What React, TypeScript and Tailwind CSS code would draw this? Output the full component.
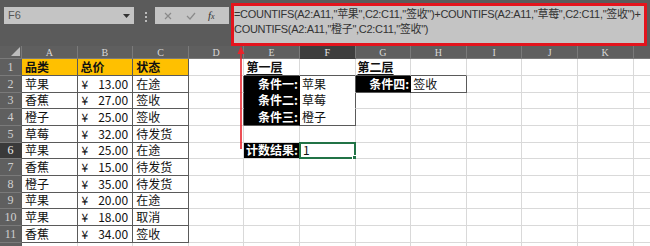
import React from "react";

const COLS = ["A", "B", "C", "D", "E", "F", "G", "H", "I", "J", "K", "L"];
const ROW_COUNT = 12;

const data: [string, string, string][] = [
  ["苹果", "13.00", "在途"],
  ["香蕉", "27.00", "签收"],
  ["橙子", "25.00", "签收"],
  ["草莓", "32.00", "待发货"],
  ["苹果", "25.00", "在途"],
  ["香蕉", "15.00", "待发货"],
  ["橙子", "35.00", "待发货"],
  ["苹果", "20.00", "在途"],
  ["苹果", "18.00", "取消"],
  ["香蕉", "34.00", "签收"],
];

const DARK = "dark";
const GRID = "grid";
const BLACK = "black";
const WHITE = "white";

function rightKind(c: string, r: number): string {
  if (["A", "B", "C"].includes(c) && r >= 1 && r <= 11) return DARK;
  if (c === "D" && r >= 2 && r <= 4) return DARK;
  if (c === "F" && r >= 2 && r <= 4) return DARK;
  if (c === "E" && r >= 2 && r <= 4) return BLACK;
  if (c === "G" && r === 2) return BLACK;
  if (c === "H" && r === 2) return DARK;
  if (c === "E" && r === 6) return BLACK;
  return GRID;
}

function bottomKind(c: string, r: number): string {
  if (["A", "B", "C"].includes(c) && r >= 1 && r <= 11) return DARK;
  if ((c === "E" || c === "F") && r === 1) return DARK;
  if ((c === "G" || c === "H") && r === 1) return DARK;
  if ((c === "E" || c === "F") && r === 4) return DARK;
  if ((c === "G" || c === "H") && r === 2) return DARK;
  if (c === "E" && (r === 2 || r === 3)) return BLACK;
  if (c === "F" && (r === 2 || r === 3)) return WHITE;
  return GRID;
}

function borderClasses(c: string, r: number): string {
  const rk = rightKind(c, r);
  const bk = bottomKind(c, r);
  const rc =
    rk === DARK
      ? "border-r-[#5a5a5a]"
      : rk === BLACK
      ? "border-r-black"
      : rk === WHITE
      ? "border-r-white"
      : "border-r-[#d9d9d9]";
  const bc =
    bk === DARK
      ? "border-b-[#5a5a5a]"
      : bk === BLACK
      ? "border-b-black"
      : bk === WHITE
      ? "border-b-white"
      : "border-b-[#d9d9d9]";
  return `border-r border-b ${rc} ${bc}`;
}

function cellContent(c: string, r: number): { node?: React.ReactNode; bg: string; align: string } {
  if (r === 1 && (c === "A" || c === "B" || c === "C")) {
    const t = c === "A" ? "品类" : c === "B" ? "总价" : "状态";
    return { node: <span className="font-bold">{t}</span>, bg: "bg-[#ffc000]", align: "justify-start pl-[3px]" };
  }
  if (r >= 2 && r <= 11) {
    const row = data[r - 2];
    if (c === "A") return { node: row[0], bg: "bg-white", align: "justify-start pl-[3px]" };
    if (c === "B")
      return {
        node: (
          <span className="flex w-full justify-between pl-[4px] pr-[4px]">
            <span>¥</span>
            <span>{row[1]}</span>
          </span>
        ),
        bg: "bg-white",
        align: "justify-start",
      };
    if (c === "C") return { node: row[2], bg: "bg-white", align: "justify-start pl-[3px]" };
  }
  if (r === 1 && c === "E")
    return { node: <span className="font-bold underline underline-offset-2">第一层</span>, bg: "bg-white", align: "justify-start pl-[2px]" };
  if (r === 1 && c === "G")
    return { node: <span className="font-bold underline underline-offset-2">第二层</span>, bg: "bg-white", align: "justify-start pl-[2px]" };
  if (c === "E" && r >= 2 && r <= 4) {
    const t = r === 2 ? "条件一:" : r === 3 ? "条件二:" : "条件三:";
    return { node: <span className="font-bold text-white">{t}</span>, bg: "bg-black", align: "justify-end pr-[1px]" };
  }
  if (c === "F" && r >= 2 && r <= 4) {
    const t = r === 2 ? "苹果" : r === 3 ? "草莓" : "橙子";
    return { node: t, bg: "bg-white", align: "justify-start pl-[2px]" };
  }
  if (c === "G" && r === 2)
    return { node: <span className="font-bold text-white">条件四:</span>, bg: "bg-black", align: "justify-end pr-[1px]" };
  if (c === "H" && r === 2) return { node: "签收", bg: "bg-white", align: "justify-start pl-[2px]" };
  if (c === "E" && r === 6)
    return { node: <span className="font-bold text-white">计数结果:</span>, bg: "bg-black", align: "justify-end pr-[1px]" };
  if (c === "F" && r === 6) return { node: "1", bg: "bg-white", align: "justify-start pl-[3px]" };
  return { bg: "bg-white", align: "justify-start" };
}

export default function App() {
  const cells: React.ReactNode[] = [];

  cells.push(
    <div key="corner" className="relative bg-[#5f5f5f] border-r border-b border-r-[#7a7a7a] border-b-[#7a7a7a]">
      <svg className="absolute right-[1px] bottom-[2px]" width="9" height="9" viewBox="0 0 9 9">
        <polygon points="9,0 9,9 0,9" fill="#bdbdbd" />
      </svg>
    </div>
  );
  COLS.forEach((c) => {
    const sel = c === "F";
    cells.push(
      <div
        key={"h" + c}
        className={
          sel
            ? "flex items-center justify-center bg-[#3e3e3e] text-[#e6e6e6] border-r border-b border-r-[#7a7a7a] border-b-[#3e3e3e] text-[10px] font-['Liberation_Serif',serif]"
            : "flex items-center justify-center bg-[#5f5f5f] text-[#d8d8d8] border-r border-b border-r-[#7a7a7a] border-b-[#7a7a7a] text-[10px] font-['Liberation_Serif',serif]"
        }
      >
        {c === "L" ? "" : c}
      </div>
    );
  });

  for (let r = 1; r <= ROW_COUNT; r++) {
    const sel = r === 6;
    cells.push(
      <div
        key={"r" + r}
        className={
          sel
            ? "flex items-center justify-center bg-[#3a3a3a] text-[#f0f0f0] border-r border-b border-r-[#3a3a3a] border-b-[#7a7a7a] text-[12px] font-['Liberation_Serif',serif]"
            : "flex items-center justify-center bg-[#5f5f5f] text-[#d0d0d0] border-r border-b border-r-[#5a5a5a] border-b-[#7a7a7a] text-[12px] font-['Liberation_Serif',serif]"
        }
      >
        {r}
      </div>
    );
    COLS.forEach((c) => {
      const { node, bg, align } = cellContent(c, r);
      const isSel = c === "F" && r === 6;
      cells.push(
        <div
          key={c + r}
          className={`relative flex items-center overflow-visible whitespace-nowrap ${bg} ${align} ${borderClasses(c, r)}`}
        >
          {node}
          {isSel && (
            <>
              <div className="pointer-events-none absolute -left-[1px] -top-[1px] -right-[1px] -bottom-[1px] border-2 border-[#217346]" />
              <div className="absolute -right-[3px] -bottom-[3px] h-[5px] w-[5px] bg-[#217346] outline outline-1 outline-white" />
            </>
          )}
        </div>
      );
    });
  }

  return (
    <div className="relative h-[246px] w-[650px] overflow-hidden bg-white font-['Noto_Sans_CJK_SC',sans-serif] text-[12px] text-[#111]">
      <div className="flex h-[46px] items-start bg-[#5b5b5b]">
        <div className="ml-[4px] mt-[7px] flex h-[17px] w-[130px] items-center justify-between bg-[#c4c4c4] pl-[4px] pr-[4px] text-[11px] text-[#555] font-['Liberation_Sans',sans-serif]">
          <span>F6</span>
          <svg width="7" height="4" viewBox="0 0 7 4">
            <polygon points="0,0 7,0 3.5,4" fill="#333" />
          </svg>
        </div>
        <div className="mt-[12px] ml-[9px] flex w-[6px] flex-col items-center gap-[2px]">
          <div className="h-[2px] w-[2px] bg-[#bbb]" />
          <div className="h-[2px] w-[2px] bg-[#bbb]" />
          <div className="h-[2px] w-[2px] bg-[#bbb]" />
        </div>
        <div className="ml-[6px] mt-[7px] flex h-[17px] w-[74px] items-center bg-[#c4c4c4]">
          <svg className="ml-[9px]" width="8" height="8" viewBox="0 0 8 8">
            <path d="M1 1 L7 7 M7 1 L1 7" stroke="#8a8a8a" strokeWidth="1.2" />
          </svg>
          <svg className="ml-[14px]" width="10" height="8" viewBox="0 0 10 8">
            <path d="M1 4 L4 7 L9 1" stroke="#8a8a8a" strokeWidth="1.2" fill="none" />
          </svg>
          <span className="ml-[12px] text-[11px] italic text-[#333] font-['Liberation_Serif',serif]">
            f<span className="text-[8px]">x</span>
          </span>
        </div>
        <div className="ml-[2px] mt-[3px] h-[43px] w-[416px] border-[3px] border-[#e3141d] bg-[#c4c4c4] pt-[1px] text-[11px] leading-[15px] tracking-[-0.3px] text-[#333] whitespace-nowrap font-['Liberation_Sans','Noto_Sans_CJK_SC',sans-serif]">
          <div>=COUNTIFS(A2:A11,"苹果",C2:C11,"签收")+COUNTIFS(A2:A11,"草莓",C2:C11,"签收")+</div>
          <div>COUNTIFS(A2:A11,"橙子",C2:C11,"签收")</div>
        </div>
      </div>

      <div className="grid grid-cols-[22px_repeat(12,55.6px)] grid-rows-[13.3px_repeat(12,16.67px)]">
        {cells}
      </div>

      <svg className="pointer-events-none absolute left-[236px] top-[45px]" width="10" height="105" viewBox="0 0 10 105">
        <polygon points="5,1 1.5,9 8.5,9" fill="#e8232b" />
        <line x1="5" y1="8" x2="5" y2="104" stroke="#e8232b" strokeWidth="1.6" />
      </svg>
    </div>
  );
}
